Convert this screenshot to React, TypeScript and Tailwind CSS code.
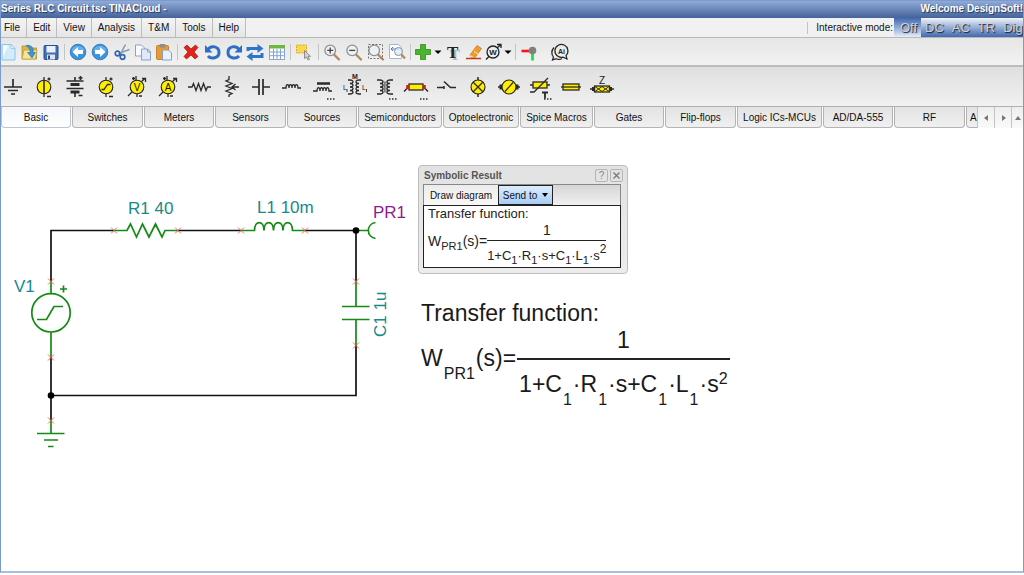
import React from "react"

const menus = ["File", "Edit", "View", "Analysis", "T&M", "Tools", "Help"]
const modes = ["DC", "AC", "TR", "Dig"]

const tabs = [
  { name: "Basic", width: "w-[70px]" },
  { name: "Switches", width: "w-[71px]" },
  { name: "Meters", width: "w-[70px]" },
  { name: "Sensors", width: "w-[71px]" },
  { name: "Sources", width: "w-[70px]" },
  { name: "Semiconductors", width: "w-[84px]" },
  { name: "Optoelectronic", width: "w-[76px]" },
  { name: "Spice Macros", width: "w-[73px]" },
  { name: "Gates", width: "w-[70px]" },
  { name: "Flip-flops", width: "w-[71px]" },
  { name: "Logic ICs-MCUs", width: "w-[85px]" },
  { name: "AD/DA-555", width: "w-[70px]" },
  { name: "RF", width: "w-[71px]" },
  { name: "A", width: "w-[70px]" },
]

/* ---------- TOOLBAR ICONS (18 x 18) ---------- */

const Lens = ({ children }: { children?: React.ReactNode }) => (
  <>
    <path d="M11 11.5L16 16.5" stroke="#b58a5a" strokeWidth="2.4" strokeLinecap="round" />
    <circle cx="7.2" cy="7.4" r="5.3" fill="#eef0f2" stroke="#8b8f94" strokeWidth="1.3" />
    {children}
  </>
)

const RoundArrow = ({ d }: { d: string }) => (
  <>
    <circle cx="9" cy="9" r="7.8" fill="#3d94dd" stroke="#2672b8" strokeWidth="0.8" />
    <path d="M2.5 8a6.6 6 0 0 1 13 0z" fill="#7cbcf0" opacity="0.7" />
    <path d={d} fill="#fff" />
  </>
)

const Caret = () => <path d="M5.500 7.500h7l-3.500 3.500z" fill="#000" />

const tools = [
  {
    name: "New",
    width: "w-[16px]",
    icon: (
      <>
        <path d="M2 1.5h9l4 4v11.500H2z" fill="#d3ecfb" stroke="#90c3e4" />
        <path d="M3 2.500h5L3 14z" fill="#fff" />
        <path d="M11 1.500v4h4z" fill="#f4fbff" stroke="#90c3e4" strokeWidth="0.8" />
      </>
    ),
  },
  {
    name: "Open",
    width: "w-[23px]",
    icon: (
      <>
        <path d="M2 3h5l1.500 2h8v11H2z" fill="#d9b845" stroke="#b18f2c" strokeWidth="0.8" />
        <path d="M4 7h13l-1.500 9H2z" fill="#f6e497" stroke="#c0a040" strokeWidth="0.8" />
        <path d="M6 2.500c5-1 8 2 7 7h2.500L12 15l-4.500-5.500H10c.5-3-1-5.500-4-7z" fill="#3f95d5" stroke="#256ca5" strokeWidth="0.600" />
      </>
    ),
  },
  {
    name: "Save",
    width: "w-[21px]",
    icon: (
      <>
        <rect x="2" y="2.500" width="14" height="14" rx="1" fill="#3f70b8" stroke="#274f8c" />
        <rect x="4.500" y="3" width="9" height="6.500" fill="#eaf1fa" />
        <rect x="5" y="11.500" width="8" height="5" fill="#dfe4ea" />
        <rect x="6" y="12.500" width="2" height="3.500" fill="#274f8c" />
      </>
    ),
  },
  { name: "|" },
  { name: "Back", width: "w-[22px]", icon: <RoundArrow d="M3.500 9L9 4v3h5v4H9v3z" /> },
  { name: "Forward", width: "w-[22px]", icon: <RoundArrow d="M14.500 9L9 4v3H4v4h5v3z" /> },
  {
    name: "Cut",
    width: "w-[21px]",
    icon: (
      <g fill="none">
        <path d="M12.500 1.500L7.500 11M16.500 6.500L5.500 10.500" stroke="#8c9eb3" strokeWidth="1.600" />
        <circle cx="4.500" cy="10.500" r="2.300" stroke="#2f64b1" strokeWidth="1.700" />
        <circle cx="9.500" cy="14" r="2.300" stroke="#2f64b1" strokeWidth="1.700" />
      </g>
    ),
  },
  {
    name: "Copy",
    width: "w-[21px]",
    icon: (
      <g stroke="#7f99c2" strokeWidth="0.900">
        <path d="M1.500 2h6l3 3v8h-9z" fill="#f7fafe" />
        <path d="M7.500 6h6l3 3v8h-9z" fill="#dfe9f7" />
        <path d="M13.500 6v3h3z" fill="#fff" />
      </g>
    ),
  },
  {
    name: "Paste",
    width: "w-[21px]",
    icon: (
      <>
        <rect x="1.500" y="2.500" width="12" height="14" rx="1" fill="#e99a32" stroke="#bd7420" strokeWidth="0.800" />
        <rect x="4.500" y="1" width="6" height="3.500" rx="1" fill="#8c8c8c" />
        <path d="M7.500 7h6l3 3v7h-9z" fill="#eaf1fb" stroke="#7f99c2" strokeWidth="0.900" />
      </>
    ),
  },
  { name: "|" },
  {
    name: "Delete",
    width: "w-[22px]",
    icon: <path d="M2 4.500L5 2l4 4 4.500-4L16 4.500 12 9l4 4.500-3 2.500-4-4-4.500 4L2 13.500 6 9z" fill="#e2231a" stroke="#a80f0a" strokeWidth="0.700" />,
  },
  {
    name: "Undo",
    width: "w-[21px]",
    icon: (
      <>
        <path d="M4 6.500C7 2 15 3 15 9.500c0 6-8 7-11 3.500" fill="none" stroke="#2c6fc4" strokeWidth="3" />
        <path d="M1 2v7.500h7.500z" fill="#2c6fc4" />
      </>
    ),
  },
  {
    name: "Redo",
    width: "w-[21px]",
    icon: (
      <>
        <path d="M14 6.500C11 2 3 3 3 9.500c0 6 8 7 11 3.500" fill="none" stroke="#2c6fc4" strokeWidth="3" />
        <path d="M17 2v7.500H9.500z" fill="#2c6fc4" />
      </>
    ),
  },
  {
    name: "Refresh",
    width: "w-[22px]",
    icon: (
      <>
        <path d="M2 8V5.500h10M16 10v3.500H6" fill="none" stroke="#2c76c9" strokeWidth="3" />
        <path d="M11.500 1L17.500 5.500l-6 4.500zM6.500 9L.5 13.500l6 4.500z" fill="#2c76c9" />
      </>
    ),
  },
  {
    name: "Table",
    width: "w-[21px]",
    icon: (
      <>
        <rect x="1.500" y="2.500" width="15" height="14" fill="#fff" stroke="#8aa8cf" />
        <rect x="1" y="2" width="16" height="3.500" fill="#6fb73f" />
        <path d="M2 9h14M2 12.700h14M5.500 6v10M9 6v10M12.500 6v10" stroke="#7ea4d6" />
      </>
    ),
  },
  { name: "|" },
  {
    name: "Select",
    width: "w-[22px]",
    icon: (
      <>
        <rect x="1.500" y="2" width="10" height="8" fill="#f7d94b" stroke="#d7aa2b" strokeDasharray="2 1" />
        <path d="M9.500 7.500v8l2-1.500 1.500 3 1.500-.7-1.500-3h2.500z" fill="#d4d4d4" stroke="#777" strokeWidth="0.800" />
      </>
    ),
  },
  { name: "|" },
  { name: "Zoom in", width: "w-[22px]", icon: <Lens><path d="M4.200 7.400h6M7.200 4.400v6" stroke="#444" strokeWidth="1.300" /></Lens> },
  { name: "Zoom out", width: "w-[22px]", icon: <Lens><path d="M4.200 7.400h6" stroke="#444" strokeWidth="1.300" /></Lens> },
  {
    name: "Zoom to fit",
    width: "w-[21px]",
    icon: (
      <>
        <Lens />
        <rect x="1.500" y="1.500" width="14" height="14" fill="none" stroke="#777" strokeDasharray="2 1.500" />
      </>
    ),
  },
  {
    name: "Zoom page",
    width: "w-[21px]",
    icon: (
      <>
        <path d="M1.500 1.500h9l3 3v11h-12z" fill="#fff" stroke="#9db6d9" />
        <path d="M3 6h8M3 6l2-2M3 6l2 2" stroke="#3d7fcf" fill="none" />
        <circle cx="10.500" cy="8.500" r="4" fill="#dcebf8" fillOpacity="0.800" stroke="#8b8f94" />
        <path d="M13.500 11.500l3.500 4" stroke="#b58a5a" strokeWidth="2.200" />
      </>
    ),
  },
  { name: "|" },
  {
    name: "Insert",
    width: "w-[19px]",
    icon: <path d="M6.500 1.500h5v5h5v5h-5v5h-5v-5h-5v-5h5z" fill="#4bb42e" stroke="#2f8a19" strokeWidth="0.800" />,
  },
  { name: "Insert options", width: "w-[12px]", icon: <Caret /> },
  {
    name: "Text",
    width: "w-[20px]",
    icon: (
      <>
        <text x="5" y="16.500" className="font-['Liberation_Serif',serif] font-bold" fontSize="15" fill="#b5b5b5">T</text>
        <text x="2" y="14.500" className="font-['Liberation_Serif',serif] font-bold" fontSize="17" fill="#222">T</text>
      </>
    ),
  },
  {
    name: "Highlight",
    width: "w-[20px]",
    icon: (
      <>
        <path d="M5 12L12 2.500l4.500 3L10 14.500H6z" fill="#f29b2c" stroke="#c46e12" strokeWidth="0.700" />
        <path d="M5 12l5 2.500H5z" fill="#f6dfb8" />
        <path d="M9 8.500l4.500 2.700" stroke="#fbd78c" strokeWidth="1.200" />
        <path d="M1 15.500h15" stroke="#c23a17" strokeWidth="1.500" />
      </>
    ),
  },
  {
    name: "Wattmeter",
    width: "w-[20px]",
    icon: (
      <>
        <circle cx="8" cy="9" r="6" fill="none" stroke="#222" strokeWidth="1.300" />
        <path d="M1 16.500L4 13.500M12 5l4-3.500M12 1.500h4V5" fill="none" stroke="#222" strokeWidth="1.300" />
        <text x="8" y="12" textAnchor="middle" className="font-bold" fontSize="8" fill="#222">W</text>
      </>
    ),
  },
  { name: "Meter options", width: "w-[8px]", icon: <Caret /> },
  { name: "|" },
  {
    name: "Probe",
    width: "w-[22px]",
    icon: (
      <>
        <path d="M1.500 8h8" stroke="#ff1212" strokeWidth="2.600" />
        <path d="M12.500 9v8.500" stroke="#17e33f" strokeWidth="2.800" />
        <circle cx="12.500" cy="7.500" r="3.800" fill="#808080" />
      </>
    ),
  },
  { name: " " },
  {
    name: "AI assistant",
    width: "w-[20px]",
    icon: (
      <>
        <path d="M15 12.500A6.500 6.500 0 1 0 12 14.200L16 16z" fill="none" stroke="#222" strokeWidth="1.200" />
        <path d="M3 4.500C0 8 .5 11.500 2.500 14L1.500 17l3.500-1.300c2 1 4 1 6-.2" fill="none" stroke="#222" strokeWidth="1.200" />
        <text x="10.500" y="10.500" textAnchor="middle" className="font-bold" fontSize="7" fill="#222">Ai</text>
      </>
    ),
  },
]

/* ---------- PARTS, drawn round the origin ---------- */

const Disc = ({ r = 6.8 }: { r?: number }) => <circle r={r} fill="#ffee00" stroke="#222" strokeWidth="1.100" />
const Dots = () => <path d="M4 12h1.500M7 12h1.500M10 12h1.500" strokeWidth="1.500" />
const MeterArrow = () => <path d="M-9 9l4-4M4.500-5.500L8-8.500M5-8.500h3.500v3.500M-1-11v4M-5-8.500h3M-3.500-10v3M0 7v3M2 9h3" />

const parts = [
  { name: "Ground", icon: <path d="M0-8V0M-9 0H9M-5 3.500H5M-2 7H2" strokeWidth="1.700" /> },
  { name: "Battery cell", icon: <><path d="M0-10V10M5-9.500v3M3.500-8h3M3 9.500h4" /><Disc /><path d="M0-6.500v13" strokeWidth="1.600" /></> },
  {
    name: "Battery",
    icon: <><path d="M0-10v4M0 6v4M-8.500-6h17M-8.500 1.500h17M5.500-11v4M3.500-9h4M3.500 8.500h4" strokeWidth="1.600" /><path d="M-4.500-2.500h9M-4.500 5h9" strokeWidth="3" /></>,
  },
  { name: "Voltage generator", icon: <><path d="M0-10V10M5-9.500v3M3.500-8h3M3 9.500h4" /><Disc /><path d="M-4.500 2.500h2.500l3.500-5h3" /></> },
  { name: "Voltmeter", icon: <><MeterArrow /><Disc /><text y="3.500" textAnchor="middle" fontSize="10" fill="#111" stroke="none">V</text></> },
  { name: "Ammeter", icon: <><MeterArrow /><Disc /><text y="3.500" textAnchor="middle" fontSize="10" fill="#111" stroke="none">A</text></> },
  { name: "Resistor", icon: <path d="M-11 0h4l1.500-3.500 2.500 7 2.500-7L2 3.500l2.500-7L7 3.500l1.500-3.500H12" /> },
  { name: "Potentiometer", icon: <path d="M-1-11v3.500l-3 1.500 6 2.500-6 2.500 6 2.500-6 2.500 6 2.500-3 1.500v2M9 0H2M5.500-3L2 0l3.500 3" /> },
  { name: "Capacitor", icon: <path d="M-9 0h7M2 0h7M-2-8v16M2-8v16" strokeWidth="1.700" /> },
  { name: "Inductor", icon: <path d="M-10 1h4c0-4.500 3-4.500 3 0 0-4.500 3-4.500 3 0 0-4.500 3-4.500 3 0 0-4.500 3-4.500 3 0H9" /> },
  { name: "Iron core inductor", icon: <><path d="M-10 4h4c0-4.500 3-4.500 3 0 0-4.500 3-4.500 3 0 0-4.500 3-4.500 3 0 0-4.500 3-4.500 3 0H9" /><path d="M-6-3.500H7" strokeWidth="2.500" /><Dots /></> },
  {
    name: "Coupled inductors",
    icon: (
      <>
        <path d="M-6-7h2c4 0 4 3.500 0 3.500 4 0 4 3.500 0 3.500 4 0 4 3.500 0 3.500 4 0 4 3.500 0 3.500h-2M7-7h-2c-4 0-4 3.500 0 3.500-4 0-4 3.500 0 3.500-4 0-4 3.500 0 3.500-4 0-4 3.500 0 3.500h2" />
        <g fontSize="7" fill="#222" stroke="none">
          <text x="-2" y="-8" className="font-bold">M</text>
          <text x="-11" y="3">L</text>
          <text x="8" y="3">L</text>
        </g>
        <path d="M-7 2v3M12.500 2v3" strokeWidth="0.900" />
      </>
    ),
  },
  {
    name: "Transformer",
    icon: (
      <>
        <path d="M-8-7h3c4 0 4 3.500 0 3.500 4 0 4 3.500 0 3.500 4 0 4 3.500 0 3.500 4 0 4 3.500 0 3.500h-3M8-7H5c-4 0-4 3.500 0 3.500-4 0-4 3.500 0 3.500-4 0-4 3.500 0 3.500-4 0-4 3.500 0 3.500h3" />
        <path d="M-.700-5.500v11M.900-5.500v11" strokeWidth="0.700" />
        <Dots />
      </>
    ),
  },
  {
    name: "Fuse resistor",
    icon: <><path d="M-12 4.500l4-4H8l4 4" strokeWidth="1.500" /><rect x="-7" y="-3" width="14" height="6" fill="#ffee00" /><path d="M-8.500-2v4M8.500-2v4" stroke="#e31414" strokeWidth="2.500" /><Dots /></>,
  },
  { name: "Switch", icon: <path d="M-10 .5h7M9 .5H3.500L-3-5.500M-3-1v3" strokeWidth="1.500" /> },
  { name: "Lamp", icon: <><path d="M0-10V10" strokeWidth="1.500" /><Disc r={7} /><path d="M-5-5L5 5M5-5L-5 5" /></> },
  { name: "Motor", icon: <><path d="M-11 0h22" strokeWidth="1.500" /><path d="M-8-2.500v5M8-2.500v5" strokeWidth="3" /><Disc r={7} /><path d="M-4 4.500l8-9" /></> },
  {
    name: "Thermistor",
    icon: <><path d="M-10-2h20" strokeWidth="1.500" /><rect x="-7" y="-5" width="14" height="6" fill="#ffee00" /><path d="M-10 5h4L8-9" strokeWidth="1.300" /><path d="M2 5.500h6M5 5.500v6" strokeWidth="1.800" /><Dots /></>,
  },
  { name: "Fuse", icon: <><path d="M-10 0h20" /><rect x="-8" y="-3" width="16" height="6" fill="#ffee00" /><path d="M-8 0h16" /></> },
  {
    name: "Impedance",
    icon: <><path d="M-12 2h24" strokeWidth="1.500" /><rect x="-7.500" y="-1" width="15" height="6" fill="#ffee00" /><path d="M-7-.5l7 5 7-5M-7 4.500l7-5 7 5" strokeWidth="1" /><text y="-3" textAnchor="middle" fontSize="10" fill="#222" stroke="none">Z</text><path d="M-9 0v4M9 0v4" strokeWidth="2" /></>,
  },
]

const Toolbar = () => (
  <div className="flex h-[27px] shrink-0 items-center bg-gradient-to-b from-[#e6e6e6] to-[#f2f2f2]" role="toolbar" aria-label="Edit">
    {tools.map((tool, i) => {
      if (tool.name === "|") {
        return <span key={i} className="flex w-[6px] shrink-0 justify-center"><span className="h-4 w-px bg-[#c4c4c4]" /></span>
      }
      if (tool.name === " ") return <span key={i} className="w-[10px]" />
      return (
        <button key={i} aria-label={tool.name} className={`flex h-5 shrink-0 items-center justify-center ${tool.width}`}>
          <svg viewBox="0 0 18 18" className="h-[18px] w-[18px] shrink-0 overflow-visible">{tool.icon}</svg>
        </button>
      )
    })}
  </div>
)

const Tabs = () => (
  <div className="flex h-[22px] shrink-0 overflow-hidden bg-white">
    <div className="flex min-w-0 flex-1 gap-px overflow-hidden" role="tablist">
      {tabs.map((tab, i) => (
        <button
          key={tab.name}
          role="tab"
          aria-selected={i === 0}
          className={`h-[21px] shrink-0 whitespace-nowrap rounded-b-[4px] border border-t-0 ${tab.width} ${
            i === 0
              ? "border-[#b9c6d8] bg-gradient-to-b from-[#f4f6f9] to-white"
              : "border-[#b4b4b4] bg-gradient-to-b from-[#e3e3e3] to-[#f0f0f0]"
          } ${i === tabs.length - 1 ? "pl-[3px] text-left" : "text-center"}`}
        >
          {tab.name}
        </button>
      ))}
    </div>
    {["M10 5v6L6 8z", "M7 5v6l4-3z", "M5 10h6L8 6z"].map((d, i) => (
      <button
        key={d}
        aria-label={["Previous tabs", "Next tabs", "Collapse"][i]}
        className={`flex h-[21px] shrink-0 items-center justify-center overflow-hidden border-l border-[#c4c4c4] bg-gradient-to-b from-[#eeeeee] to-[#fafafa] ${i === 2 ? "w-[12px]" : "w-[17px]"}`}
      >
        <svg viewBox="0 0 16 16" className="h-4 w-4 shrink-0"><path d={d} fill="#777" /></svg>
      </button>
    ))}
  </div>
)

const Sub = ({ large, children }: { large?: boolean; children: string }) => (
  <span className={large ? "align-[-13px] px-px text-[16px] leading-[0]" : "align-[-4px] text-[11px] leading-[0]"}>{children}</span>
)

const Formula = ({ large }: { large?: boolean }) => (
  <div className={large ? "flex gap-px text-[23px] leading-[26px]" : "flex text-[14px] leading-[16px]"}>
    <div className={large ? "pt-[18px]" : "pt-[11px]"}>
      W<Sub large={large}>PR1</Sub>(s)=
    </div>
    <div className="text-center">
      <div className={large ? "border-b-2 border-[#222] pb-[5px]" : "border-b border-[#222] pb-[2px]"}>1</div>
      <div className={large ? "px-[2px] pt-[11px]" : "pt-[7px] text-[13px]"}>
        1+C<Sub large={large}>1</Sub>·R<Sub large={large}>1</Sub>·s+C<Sub large={large}>1</Sub>·L<Sub large={large}>1</Sub>·s
        <span className={large ? "align-[8px] text-[16px] leading-[0]" : "align-[7px] text-[12px] leading-[0]"}>2</span>
      </div>
    </div>
  </div>
)

const ResultWindow = () => (
  <section className="w-[210px] rounded-[4px] border border-[#bdbdbd] bg-gradient-to-b from-[#e2e2e2] to-[#ececec] px-1 pb-[5px]">
    <header className="flex h-[18px] items-center gap-[2px] pl-px">
      <h2 className="flex-1 font-bold text-[#555]">Symbolic Result</h2>
      <button className="h-[13px] w-[13px] rounded-[2px] border border-[#b5b5b5] text-center leading-[11px] text-[#888]">?</button>
      <button aria-label="Close" className="flex h-[13px] w-[13px] items-center justify-center rounded-[2px] border border-[#b5b5b5]">
        <svg viewBox="0 0 9 9" className="h-[9px] w-[9px]"><path d="M1.500 1.500l6 6M7.500 1.500l-6 6" stroke="#777" strokeWidth="1.300" /></svg>
      </button>
    </header>
    <div className="mr-[2px]">
      <div className="flex h-[21px] border border-b-0 border-[#888] bg-gradient-to-b from-[#d6d6d6] to-[#f0f0f0]">
        <button className="w-[74px] bg-gradient-to-b from-[#ececec] to-[#f8f8f8]">Draw diagram</button>
        <button className="flex w-[55px] items-center justify-center gap-[5px] border border-[#222] bg-gradient-to-b from-[#dcecfd] to-[#a8cdf5]">
          Send to
          <svg viewBox="0 0 6 4" className="h-1 w-[6px]"><path d="M0 0h6L3 4z" /></svg>
        </button>
      </div>
      <div className="h-[63px] border border-[#222] bg-white pl-1 text-[#222]">
        <p className="text-[13px] leading-[16px]">Transfer function:</p>
        <Formula />
      </div>
    </div>
  </section>
)

const pins = [[114, 230], [178, 230], [241, 230], [305, 230], [51, 281], [51, 357], [51, 420], [356, 281], [356, 345]]

const Circuit = () => (
  <svg viewBox="1 129 416 330" className="h-[330px] w-[416px] shrink-0" role="img" aria-label="Series RLC circuit">
    <g fill="none" stroke="#111" strokeWidth="1.700">
      <path d="M51 281V230.500H114M178 230.500H241M305 230.500H356V281M356 345V395.500H51M51 357V420" />
    </g>
    <g fill="none" stroke="#158a15" strokeWidth="1.700">
      <path d="M114 230.500H127L130.500 224 136.500 237 142.500 224 149 237 155.500 224 162 237 165 230.500H178" />
      <path d="M241 230.500H254.500C254.500 220 264 220 264 230.500 264 220 273.500 220 273.500 230.500 273.500 220 283 220 283 230.500 283 220 292.500 220 292.500 230.500H305" />
      <path d="M356 230.500H368M375.500 222.500C366 224 366 237 375.500 238.500" />
      <path d="M356 281V306.500M342 306.500H369.500M342 319.500H369.500M356 319.500V345" />
      <circle cx="51" cy="312.800" r="19.200" />
      <path d="M51 281V293.500M51 332V357M37 319.500H46.500L54 306.500H63M60 289H67M63.500 285.500V292.500" />
      <path d="M51 420V433.500M37 433.500H64.500M44 440H58M48 446.500H53.500" />
    </g>
    {pins.map(([x, y]) => (
      <path key={`${x}-${y}`} d={`M${x - 3} ${y - 2.5}l6 6M${x + 3} ${y - 2.5}l-6 6`} stroke="#e8604c" strokeWidth="0.900" />
    ))}
    <circle cx="356" cy="230.500" r="3.300" />
    <circle cx="51" cy="395.500" r="3.300" />
    <g fontSize="17" fill="#178a8c">
      <text x="128" y="214">R1 40</text>
      <text x="257" y="213">L1 10m</text>
      <text x="14" y="292">V1</text>
      <text transform="translate(386 337) rotate(-90)">C1 1u</text>
      <text x="373" y="218" fill="#911a91">PR1</text>
    </g>
  </svg>
)

const App = () => {
  return (
    <div className="h-screen bg-white pb-[2px] font-['Liberation_Sans',Arial,sans-serif] text-[10px] text-[#111]">
      <div className="flex h-full flex-col overflow-hidden border border-[#7b9bd0] border-b-2 border-b-[#a9bfe2]">
        {/* TITLE BAR */}
        <header className="flex h-[17px] shrink-0 items-center justify-between bg-gradient-to-b from-[#90abd7] to-[#45639a] pb-[2px] font-bold text-white [text-shadow:1px_1px_1px_#26365a]">
          <h1>Series RLC Circuit.tsc TINACloud -</h1>
          <span className="whitespace-nowrap">Welcome DesignSoft!</span>
        </header>

        {/* MENU */}
        <nav className="flex h-[20px] shrink-0 border-b border-[#b8b8b8] bg-[#f1f1f1]">
          {menus.map((menu) => (
            <button key={menu} className="border-r border-[#bcbcbc] bg-gradient-to-b from-[#f4f4f4] to-[#e6e6e6] px-[6px] first:pl-[3px]">
              {menu}
            </button>
          ))}
          <div className="ml-auto flex items-center">
            <span className="mr-2 h-3 w-px bg-[#c4c4c4]" />
            <span className="pr-px">Interactive mode:</span>
            <div className="flex h-full text-[13px] text-[#cdd0d6]">
              <button className="w-[27px] bg-gradient-to-b from-[#4169ae] to-[#e6eefa] pl-[2px] [text-shadow:1px_1px_1px_#1c1f28]">Off</button>
              <div className="flex w-[102px] gap-2 overflow-hidden bg-gradient-to-b from-[#f0f4fb] to-[#4169ae] pl-1">
                {modes.map((mode) => <button key={mode} className="[text-shadow:1px_1px_1px_#1c1f28]">{mode}</button>)}
              </div>
            </div>
          </div>
        </nav>

        <Toolbar />

        {/* PARTS BAR */}
        <div className="flex h-[42px] shrink-0 overflow-hidden border-b border-t-2 border-b-[#b0b0b0] border-t-[#bcbcbc] bg-gradient-to-b from-[#dfdfdf] to-[#f1f1f1]" role="toolbar" aria-label="Parts">
          {parts.map((part) => (
            <button key={part.name} aria-label={part.name} className="w-[31px] shrink-0">
              <svg viewBox="-12 -20 31 40" className="h-[40px] w-[31px] overflow-visible" fill="none" stroke="#2a2a2a" strokeWidth="1.300">{part.icon}</svg>
            </button>
          ))}
        </div>

        <Tabs />

        {/* CANVAS */}
        <main className="flex min-h-0 flex-1 items-start gap-px">
          <Circuit />
          <div className="pt-[36px]">
            <ResultWindow />
            <div className="pl-[3px] pt-[25px] text-[#1a1a1a]">
              <p className="text-[23px] leading-[28px]">Transfer function:</p>
              <Formula large />
            </div>
          </div>
        </main>
      </div>
    </div>
  )
}

export default App
